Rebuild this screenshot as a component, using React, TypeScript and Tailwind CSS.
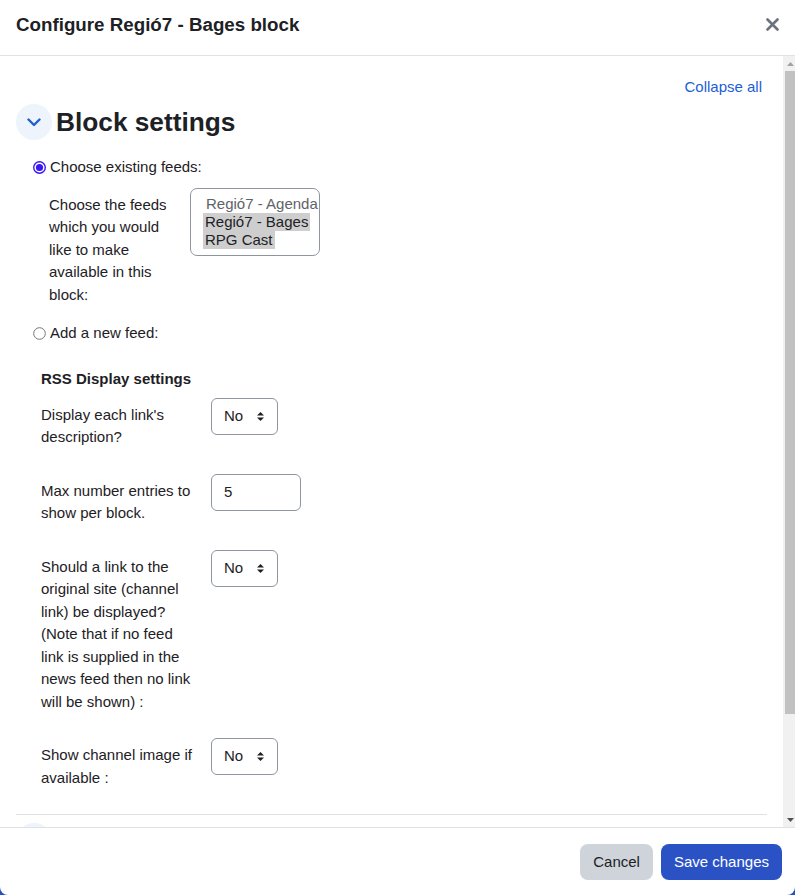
import React from "react";

const font = { fontFamily: '"Liberation Sans", Arial, sans-serif' };

function Radio({ checked }: { checked?: boolean }) {
  return (
    <svg width="13" height="13" viewBox="0 0 13 13" className="shrink-0">
      {checked ? (
        <>
          <circle cx="6.5" cy="6.5" r="5.8" fill="white" stroke="#3a17f2" strokeWidth="1.4" />
          <circle cx="6.5" cy="6.5" r="3.6" fill="#3a17f2" />
        </>
      ) : (
        <circle cx="6.5" cy="6.5" r="5.8" fill="white" stroke="#767676" strokeWidth="1" />
      )}
    </svg>
  );
}

function Arrows() {
  return (
    <svg width="9" height="11" viewBox="0 0 9 11">
      <path d="M4.5 1 L8 4.5 L1 4.5 Z" fill="#1d2125" />
      <path d="M4.5 10 L8 6.5 L1 6.5 Z" fill="#1d2125" />
    </svg>
  );
}

function SelectNo() {
  return (
    <div className="flex h-[37px] w-[67px] shrink-0 items-center justify-between rounded-[6px] border border-[#8f959e] bg-white pl-[12px] pr-[12px] text-[15px] text-[#1d2125]">
      <span>No</span>
      <Arrows />
    </div>
  );
}

function Row({ label, children }: { label: React.ReactNode; children: React.ReactNode }) {
  return (
    <div className="mb-[16px] flex items-start">
      <div className="w-[154px] shrink-0 pb-[9px] pt-[6px] text-[15px] leading-[22.5px] text-[#1d2125]">{label}</div>
      <div className="ml-[16px]">{children}</div>
    </div>
  );
}

export default function App() {
  return (
    <div className="h-[895px] w-[795px] bg-[#2a4fc2]" style={font}>
      <div className="flex h-[895px] w-[795px] flex-col overflow-hidden rounded-b-[8px] bg-white text-[#1d2125]">
        {/* Header */}
        <div className="flex h-[56px] shrink-0 items-center justify-between border-b border-[#dee2e6] pl-[16px] pr-[16px]">
          <h5 className="-mt-[5px] text-[18.75px] font-bold leading-[22.5px] text-[#1d2125]">Configure Regió7 - Bages block</h5>
          <svg width="13" height="13" viewBox="0 0 13 13" className="-mt-[7px]">
            <path d="M1.5 1.5 L11.5 11.5 M11.5 1.5 L1.5 11.5" stroke="#6a737b" strokeWidth="2.6" strokeLinecap="round" />
          </svg>
        </div>

        {/* Body */}
        <div className="flex h-[771px] shrink-0">
          <div className="flex-1 overflow-hidden pl-[16px] pr-[16px] pt-[20px]">
            <div className="flex h-[22px] justify-end pr-[5px] text-[15px] leading-[22px] text-[#1c5ed6]">Collapse all</div>
            <div className="mt-[6px] flex items-center">
              <div className="flex h-[36px] w-[36px] items-center justify-center rounded-full bg-[#eef4fb]">
                <svg width="14" height="9" viewBox="0 0 14 9">
                  <path d="M1.5 1.5 L7 7 L12.5 1.5" fill="none" stroke="#1f5fd3" strokeWidth="2.4" strokeLinecap="round" strokeLinejoin="round" />
                </svg>
              </div>
              <h3 className="ml-[4px] text-[26.25px] font-bold leading-[30px] text-[#1d2125]">Block settings</h3>
            </div>

            <div className="mt-[16px] flex h-[22.5px] items-center pl-[17px] text-[15px]">
              <Radio checked />
              <span className="ml-[4px]">Choose existing feeds:</span>
            </div>

            <div className="mt-[9px] flex items-start pl-[33px]">
              <div className="w-[129px] shrink-0 pt-[6px] text-[15px] leading-[22.5px]">
                Choose the feeds which you would like to make available in this block:
              </div>
              <div className="ml-[12px] h-[68px] w-[130px] shrink-0 overflow-hidden rounded-[7px] border border-[#8f959e] pl-[12px] pt-[6px] text-[15px] leading-[18px]">
                <div className="whitespace-nowrap pl-[3px] text-[#5f6368]">Regió7 - Agenda</div>
                <div><span className="inline-block bg-[#cecece] px-[2px]">Regió7 - Bages</span></div>
                <div><span className="inline-block bg-[#cecece] px-[2px]">RPG Cast</span></div>
              </div>
            </div>

            <div className="mt-[16px] flex h-[22.5px] items-center pl-[17px] text-[15px]">
              <Radio />
              <span className="ml-[4px]">Add a new feed:</span>
            </div>

            <div className="mt-[23px] pl-[25px]">
              <div className="text-[15px] font-bold leading-[22px]">RSS Display settings</div>
              <div className="mt-[8px]">
                <Row label="Display each link's description?">
                  <SelectNo />
                </Row>
                <Row label="Max number entries to show per block.">
                  <div className="flex h-[37px] w-[90px] items-center rounded-[6px] border border-[#8f959e] pl-[12px] text-[15px]">5</div>
                </Row>
                <Row label="Should a link to the original site (channel link) be displayed? (Note that if no feed link is supplied in the news feed then no link will be shown) :">
                  <SelectNo />
                </Row>
                <Row label="Show channel image if available :">
                  <SelectNo />
                </Row>
              </div>
            </div>

            <div className="border-t border-[#dee2e6]" />
            <div className="mt-[8px] h-[36px] w-[36px] rounded-full bg-[#eef4fb]" />
          </div>

          {/* Scrollbar */}
          <div className="flex w-[12px] shrink-0 flex-col bg-[#f1f1f1]">
            <div className="flex h-[15px] items-center justify-center pl-[2px]">
              <svg width="7" height="4" viewBox="0 0 7 4">
                <path d="M3.5 0 L7 4 L0 4 Z" fill="#a3a3a3" />
              </svg>
            </div>
            <div className="ml-[2px] h-[643px] bg-[#c1c1c1]" />
            <div className="flex-1" />
            <div className="flex h-[15px] items-center justify-center pl-[2px]">
              <svg width="7" height="4" viewBox="0 0 7 4">
                <path d="M0 0 L7 0 L3.5 4 Z" fill="#505050" />
              </svg>
            </div>
          </div>
        </div>

        {/* Footer */}
        <div className="flex flex-1 items-start justify-end gap-[8px] border-t border-[#dee2e6] pr-[13px] pt-[16px]">
          <button className="h-[36px] rounded-[8px] bg-[#ced4da] px-[13px] text-[15px] text-[#1d2125]">Cancel</button>
          <button className="h-[36px] rounded-[8px] bg-[#2a52c5] px-[13px] text-[15px] text-white">Save changes</button>
        </div>
      </div>
    </div>
  );
}
